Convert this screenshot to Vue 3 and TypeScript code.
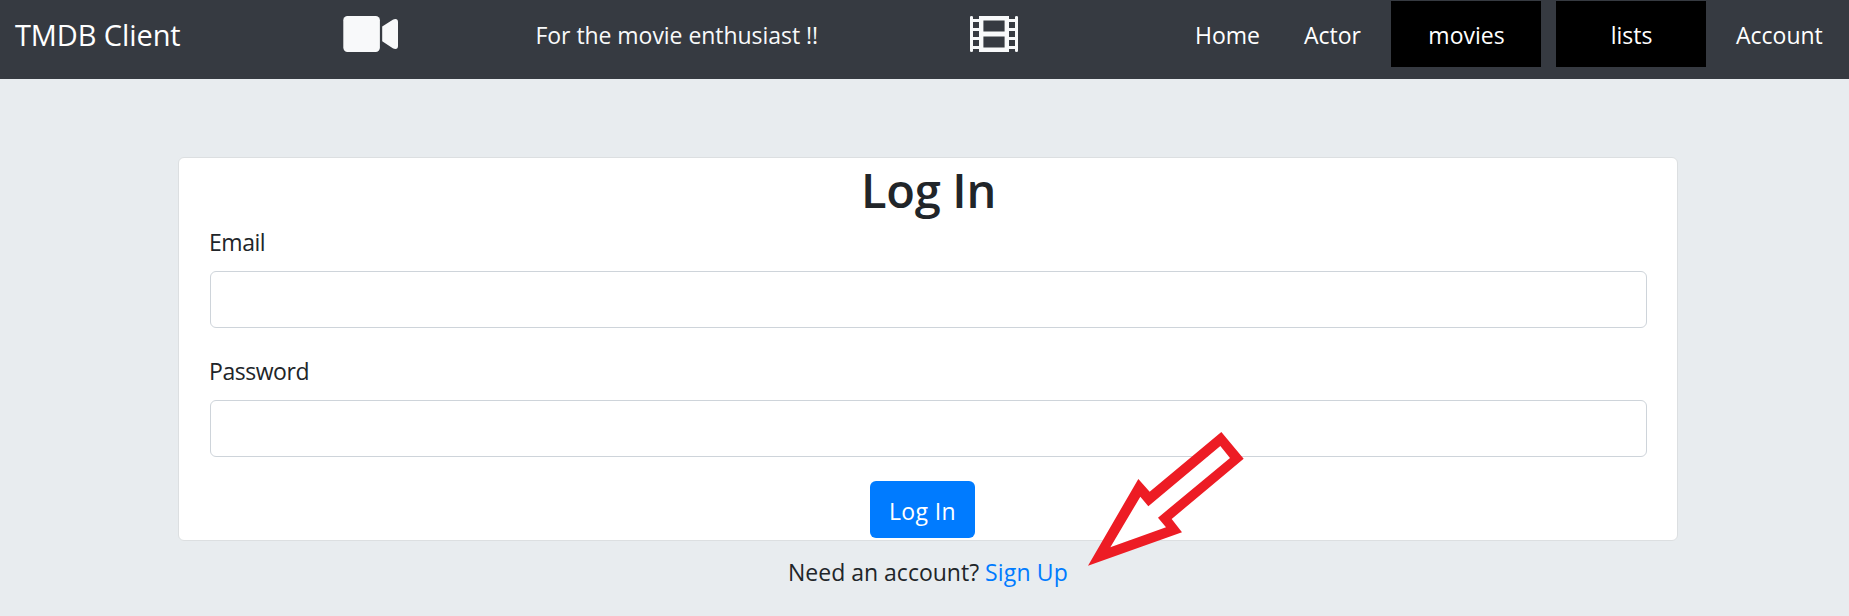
<script setup lang="ts">
import { ref } from 'vue'

interface NavItem {
  label: string
  kind: 'home' | 'actor' | 'menu' | 'account'
}

const navItems: NavItem[] = [
  { label: 'Home', kind: 'home' },
  { label: 'Actor', kind: 'actor' },
  { label: 'movies', kind: 'menu' },
  { label: 'lists', kind: 'menu' },
  { label: 'Account', kind: 'account' },
]

const email = ref('')
const password = ref('')
</script>

<template>
  <div class="page">
    <header class="navbar">
      <a class="brand">TMDB Client</a>
      <svg class="icon" width="56" height="36" viewBox="0 0 56 36" aria-hidden="true">
        <rect x="0.3" y="0" width="36.6" height="36" rx="4.2" />
        <path d="M39.2 10.6 49.8 3.7Q51 3 52.4 3 55 3 55 6V30Q55 33 52.4 33 51 33 49.8 32.2L39.2 25.2Z" />
      </svg>
      <span class="tagline">For the movie enthusiast !!</span>
      <svg class="icon" width="48" height="36" viewBox="0 0 48 36" fill-rule="evenodd" aria-hidden="true">
        <path
          d="M0 1Q0 0 1.5 0 3 0 3 1V3H9V0H39V3H45V1Q45 0 46.5 0 48 0 48 1V35Q48 36 46.5 36 45 36 45 35V33H39V36H9V33H3V35Q3 36 1.5 36 0 36 0 35Z
             M3 6V12H9V6Z M3 15V21H9V15Z M3 24V30H9V24Z
             M39 6V12H45V6Z M39 15V21H45V15Z M39 24V30H45V24Z
             M13.4 4.4V15.4H34.6V4.4Z M13.4 20.4V31.4H34.6V20.4Z"
        />
      </svg>
      <nav class="links">
        <a v-for="item in navItems" :key="item.label" class="link" :class="item.kind">{{ item.label }}</a>
      </nav>
    </header>

    <main class="content">
      <form class="card" @submit.prevent>
        <h2 class="title">Log In</h2>
        <div class="group">
          <label class="label" for="email">Email</label>
          <input id="email" v-model="email" class="input" type="email" />
        </div>
        <div class="group">
          <label class="label" for="password">Password</label>
          <input id="password" v-model="password" class="input" type="password" />
        </div>
        <button class="submit" type="submit">Log In</button>
      </form>
      <p class="signup">Need an account? <a class="signup-link">Sign Up</a></p>
    </main>

    <svg class="arrow" width="156" height="134" viewBox="0 0 468 402" aria-hidden="true">
      <path class="arrow-fill" d="M67 346 157 194 181 223 397 42 426 78 210 257 234 286Z" />
      <path
        class="arrow-line"
        fill-rule="evenodd"
        d="M0 401 151 141 185 179 400 0 467 80 251 261 282 301Z M67 346 157 194 181 223 397 42 426 78 210 257 234 286Z"
      />
    </svg>
  </div>
</template>

<style>
body {
  margin: 0;
  background: #e8ecef;
}
</style>

<style scoped>
.page {
  position: relative;
  box-sizing: border-box;
  width: 100%;
  height: 616px;
  overflow: hidden;
  background: #e8ecef;
  color: #212529;
  font-family: 'Open Sans', 'Noto Sans', sans-serif;
  font-size: 23px;
}

.navbar {
  display: grid;
  grid-template-columns: 343px 192.5px 434.5px 225px 1fr;
  height: 79px;
  background: #363a41;
  color: #fff;
}

.brand {
  padding-left: 15px;
  font-size: 29px;
  line-height: 70px;
  letter-spacing: -0.1px;
}

.icon {
  margin-top: 16px;
  fill: #f8f9fa;
}

.tagline {
  color: #f8f9fa;
  line-height: 70px;
  letter-spacing: -0.05px;
  white-space: nowrap;
}

.links {
  display: flex;
  align-items: flex-start;
}

.link {
  flex: none;
  line-height: 70px;
}

.home {
  width: 109px;
}

.actor {
  width: 87px;
}

.menu {
  box-sizing: border-box;
  width: 150px;
  height: 66px;
  margin: 1px 15px 0 0;
  padding-left: 1px;
  background: #000;
  line-height: 68px;
  text-align: center;
}

.account {
  margin-left: 15px;
}

.content {
  width: 1500px;
  margin: 78px 0 0 178px;
}

.card {
  box-sizing: border-box;
  height: 384px;
  padding: 0 30px 0 31px;
  border: 1px solid #dcdfe1;
  border-radius: 6px;
  background: #fff;
}

.title {
  margin: 0 0 2px;
  font-size: 47px;
  font-weight: 600;
  line-height: 64px;
  letter-spacing: -0.3px;
  text-align: center;
}

.group {
  margin-bottom: 25px;
}

.label {
  display: block;
  margin: 0 0 11px -1px;
  line-height: 36px;
  letter-spacing: -0.45px;
}

.input {
  display: block;
  box-sizing: border-box;
  width: 100%;
  height: 57px;
  padding: 9px 18px;
  border: 1px solid #ced4da;
  border-radius: 6px;
  outline: none;
  background: #fff;
  color: #495057;
  font: inherit;
}

.submit {
  display: block;
  width: 105px;
  height: 57px;
  margin: -1px auto 0 660px;
  padding: 3px 0 0;
  border: 0;
  border-radius: 6px;
  background: #007bff;
  color: #fff;
  font: inherit;
  letter-spacing: 0.4px;
}

.signup {
  margin: 13px 0 0;
  line-height: 36px;
  text-align: center;
}

.signup-link {
  color: #007bff;
  letter-spacing: 0.15px;
}

/* Annotation arrow laid over the form, pointing at the sign-up link. */
.arrow {
  position: absolute;
  top: 432px;
  left: 1088px;
  pointer-events: none;
}

.arrow-fill {
  fill: #fff;
}

.arrow-line {
  fill: #ed1c24;
}
</style>
